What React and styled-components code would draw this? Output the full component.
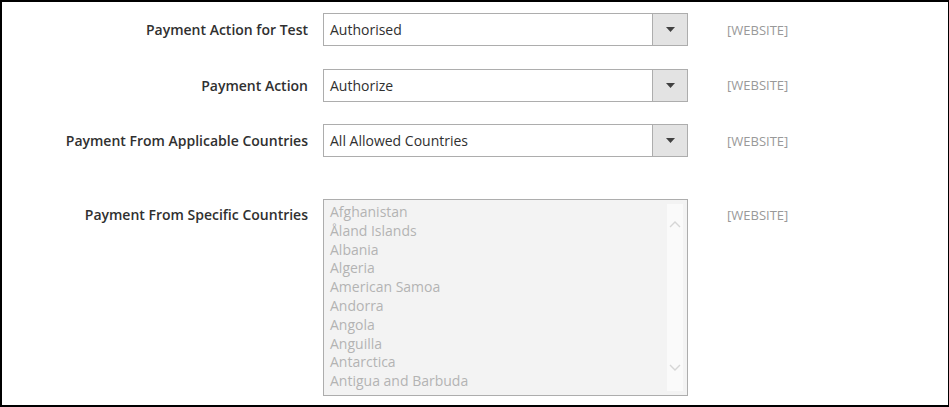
import React from 'react';
import styled, { createGlobalStyle } from 'styled-components';

const GlobalStyle = createGlobalStyle`
  html, body {
    margin: 0;
    padding: 0;
    background: #fff;
  }
  body {
    font-family: "Open Sans", "Liberation Sans", sans-serif;
  }
`;

const countries = [
  'Afghanistan',
  'Åland Islands',
  'Albania',
  'Algeria',
  'American Samoa',
  'Andorra',
  'Angola',
  'Anguilla',
  'Antarctica',
  'Antigua and Barbuda',
];

const rows = [
  { id: 1, label: 'Payment Action for Test', value: 'Authorised' },
  { id: 2, label: 'Payment Action', value: 'Authorize' },
  { id: 3, label: 'Payment From Applicable Countries', value: 'All Allowed Countries' },
];

const App = () => {
  return (
    <>
      <GlobalStyle />
      <Frame>
        <Form>
          {rows.map((row) => (
            <Row key={row.id}>
              <Label>{row.label}</Label>
              <Select>
                <SelectValue>{row.value}</SelectValue>
                <SelectButton>
                  <svg width="9" height="5" viewBox="0 0 9 5">
                    <path d="M0 0 H9 L4.5 5 Z" fill="#414141" />
                  </svg>
                </SelectButton>
              </Select>
              <Scope>[WEBSITE]</Scope>
            </Row>
          ))}
          <Row $tall>
            <Label $top>Payment From Specific Countries</Label>
            <MultiSelect>
              <OptionList>
                {countries.map((c) => (
                  <Option key={c}>{c}</Option>
                ))}
              </OptionList>
              <ScrollTrack>
                <svg width="12" height="7" viewBox="0 0 12 7">
                  <path d="M1 6 L6 1 L11 6" fill="none" stroke="#d6d6d6" strokeWidth="1.4" />
                </svg>
                <svg width="12" height="7" viewBox="0 0 12 7">
                  <path d="M1 1 L6 6 L11 1" fill="none" stroke="#d6d6d6" strokeWidth="1.4" />
                </svg>
              </ScrollTrack>
            </MultiSelect>
            <Scope $top>[WEBSITE]</Scope>
          </Row>
        </Form>
      </Frame>
    </>
  );
};
export default App;

const Frame = styled.div`
  box-sizing: border-box;
  width: 949px;
  height: 407px;
  border: 2px solid #000;
  border-right-width: 1px;
  overflow: hidden;
`;

const Form = styled.div`
  display: flex;
  flex-direction: column;
  gap: 22.5px;
  padding-top: 11px;
`;

const Row = styled.div`
  display: grid;
  grid-template-columns: 306px 365px auto;
  column-gap: 15px;
  align-items: ${(p) => (p.$tall ? 'start' : 'center')};
  margin-top: ${(p) => (p.$tall ? '19.5px' : '0')};
`;

const Label = styled.div`
  text-align: right;
  font-size: 14px;
  font-weight: 600;
  color: #303030;
  padding-top: ${(p) => (p.$top ? '6px' : '0')};
`;

const Select = styled.div`
  box-sizing: border-box;
  height: 33px;
  display: flex;
  align-items: stretch;
  border: 1px solid #adadad;
  background: #fff;
`;

const SelectValue = styled.div`
  flex: 1;
  display: flex;
  align-items: center;
  padding-left: 6px;
  font-size: 14px;
  color: #303030;
`;

const SelectButton = styled.div`
  width: 34px;
  display: flex;
  align-items: center;
  justify-content: center;
  background: #e3e3e3;
  border-left: 1px solid #adadad;
`;

const Scope = styled.div`
  padding-left: 24px;
  font-size: 13px;
  color: #999;
  padding-top: ${(p) => (p.$top ? '7px' : '0')};
`;

const MultiSelect = styled.div`
  box-sizing: border-box;
  height: 197px;
  display: flex;
  border: 1px solid #adadad;
  background: #f3f3f3;
  padding: 3px 4px 4px 0;
`;

const OptionList = styled.div`
  flex: 1;
  overflow: hidden;
`;

const Option = styled.div`
  padding-left: 6px;
  font-size: 14px;
  line-height: 18.8px;
  color: #b3b3b3;
  white-space: nowrap;
`;

const ScrollTrack = styled.div`
  width: 16px;
  margin-top: 1px;
  display: flex;
  flex-direction: column;
  justify-content: space-between;
  align-items: center;
  padding: 17px 0 20px;
  background: #fafafa;
`;
